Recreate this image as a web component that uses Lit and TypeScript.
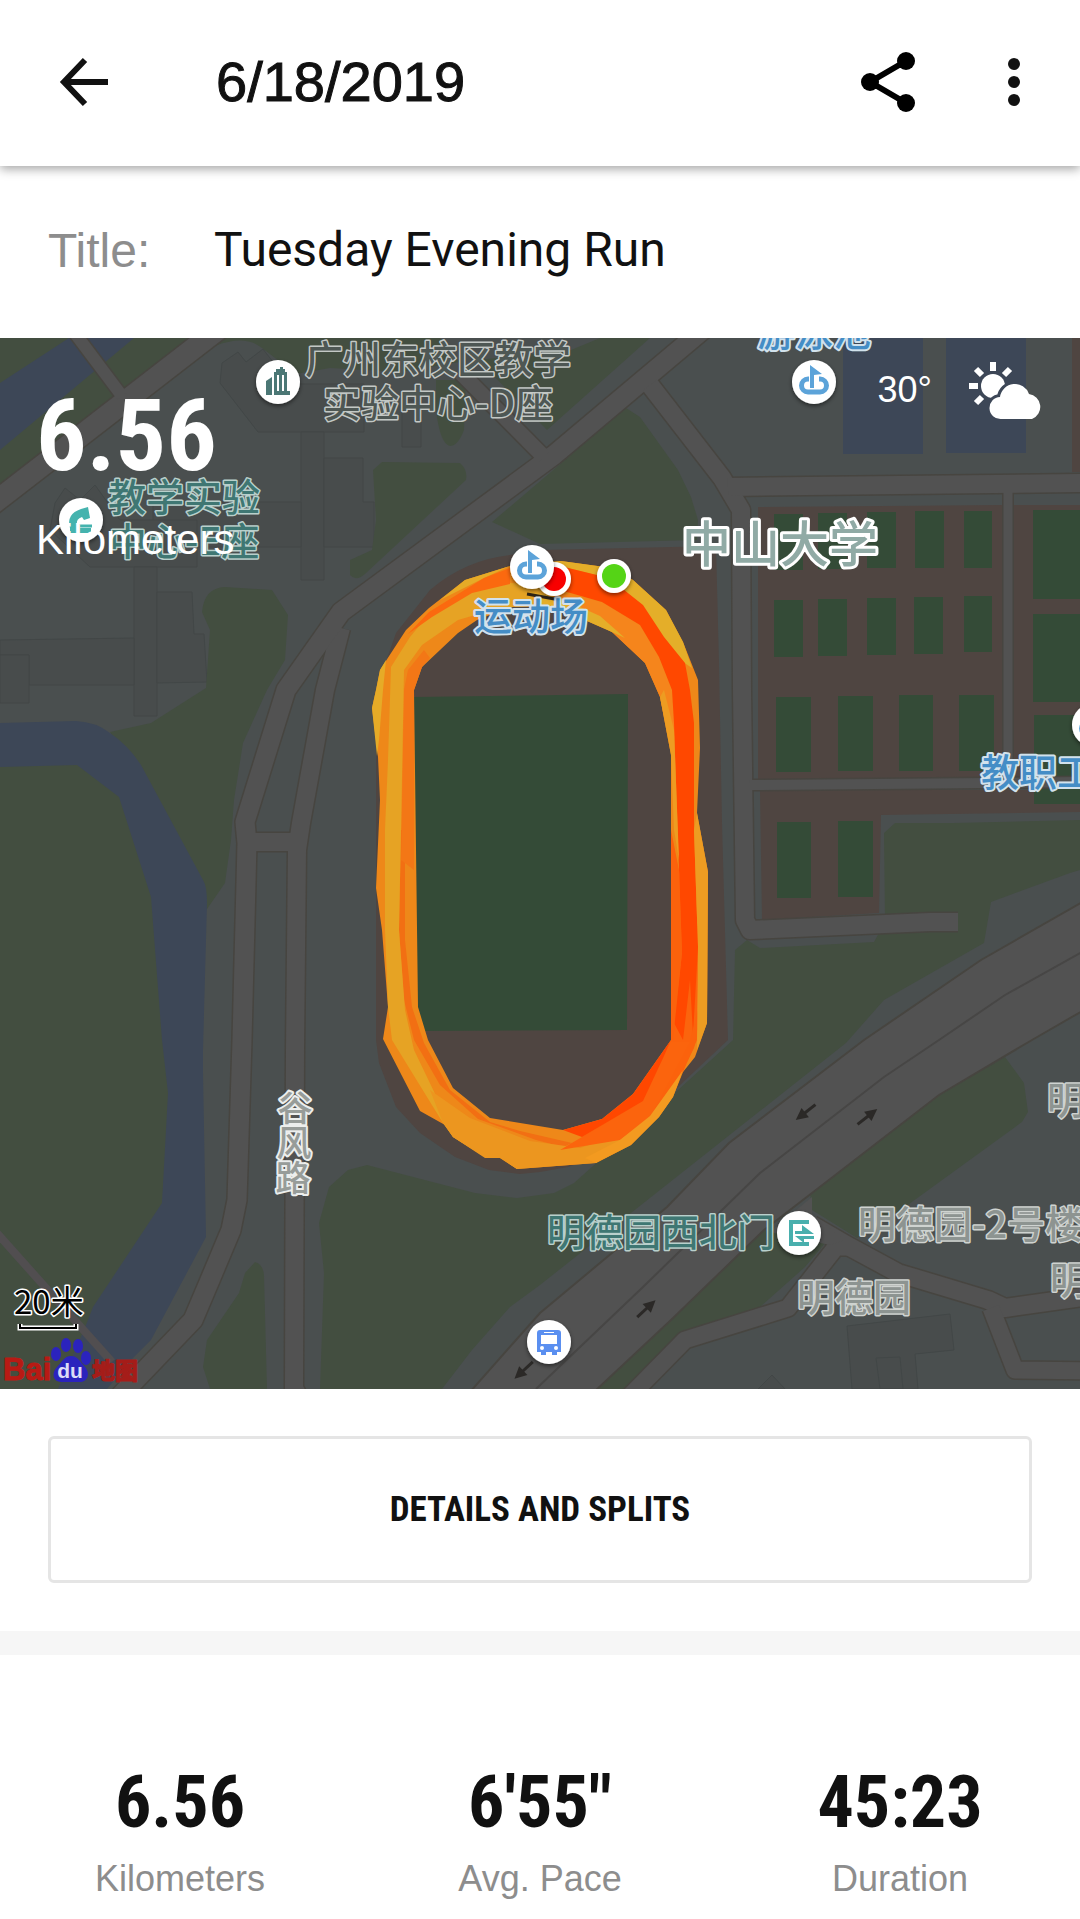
import { LitElement, html, svg, css } from "lit";
import { customElement, property } from "lit/decorators.js";

type Label = { text: string; x: number; y: number; kind: string; anchor?: string };

const COURTS: number[][] = [
  [774, 514, 29, 56], [818, 513, 29, 56], [867, 512, 29, 56], [915, 511, 29, 57], [964, 511, 28, 57],
  [774, 600, 29, 57], [818, 599, 29, 57], [867, 598, 29, 57], [914, 597, 29, 57], [964, 596, 28, 56],
  [776, 697, 35, 75], [838, 696, 35, 75], [899, 695, 34, 76], [959, 695, 35, 76],
  [777, 822, 34, 76], [838, 821, 35, 76],
  [1033, 510, 50, 89], [1033, 614, 50, 88], [1034, 715, 50, 89],
];

const ROADS: { d: string; w: number }[] = [
  { d: "M-10 506L220 328", w: 21 },
  { d: "M74 332L122 396", w: 12 },
  { d: "M300 1400L294 1388L295 1050L297 850L301 823L325 690L341 628", w: 18 },
  { d: "M120 1396L193 1320L210 1280L231 1230L237 1200L242 1040L247 843L245 822L286 690L341 612L554 455L705 328", w: 19 },
  { d: "M247 842L298 842", w: 18 },
  { d: "M460 372L544 457", w: 15 },
  { d: "M650 385L722 478L741 510L742 690L745 920L750 930L930 922L958 922", w: 18 },
  { d: "M728 487L900 485L1090 483", w: 18 },
  { d: "M1008 488L1008 782", w: 9 },
  { d: "M750 785L1090 782", w: 10 },
  { d: "M812 1225L850 1247L898 1273L988 1300L1005 1308L1090 1296", w: 18 },
  { d: "M850 1247L836 1247L788 1308L685 1340L630 1396", w: 17 },
  { d: "M991 1308L1015 1370L1090 1371", w: 17 },
];

const GREENS: string[] = [
  "M0 338H215L0 500Z",
  "M215 346Q245 334 262 348L296 374L330 368L400 372L460 362L440 338H225Z",
  "M436 380H466L464 430Q458 446 450 446Q440 444 436 410Z",
  "M478 360L571 350L600 338H650L547 430Z",
  "M626 408L640 417L678 470L691 497L698 520L697 540L540 544L492 522Z",
  "M382 462L460 463Q468 470 466 480L365 574Q356 582 350 575L350 560L372 550L376 520L373 470Z",
  "M110 732L151 723L206 688L210 630L202 612Q204 588 225 587L272 590L288 615L285 660L267 690L243 743L234 800L231 840L225 883L205 912L150 800Z",
  "M0 760H80L125 795L155 897L170 1093L162 1205L84 1330L58 1389H0Z",
  "M255 1262Q263 1264 264 1275L267 1389H210L203 1367L207 1340L239 1293L245 1273Z",
  "M367 1165L348 1170L329 1187L319 1223L324 1273L320 1389H442L472 1350L510 1307L540 1285L846 1043L884 1000L984 943L991 902L1070 873L1080 870V820L953 823H895L884 833L885 922L874 942L760 948L747 940L735 950L733 1040L678 1090L574 1183L554 1193L517 1198L475 1193Z",
  "M1005 1057L1024 1083L1028 1112L1022 1122L905 1207L857 1238L812 1210L810 1193L939 1095Z",
  "M764 1230L828 1240L805 1267L760 1307L681 1333L631 1389H597L671 1320Z",
];

const BUILDINGS: string[] = [
  "M222 363L238 352L246 362L263 349L290 384H364V432H258L220 383Z",
  "M301 432H324V580H301Z",
  "M324 458H363V502H374V547H324Z",
  "M402 400H421V447H402Z",
  "M153 502H301V547H153Z",
  "M55 503L65 488L80 500L95 485L120 520H197V567H90L50 530Z",
  "M134 567H157V716H134Z",
  "M157 592H192L194 634H204L207 682L157 683Z",
  "M0 640L134 638V685H29V655H0Z",
  "M0 655H29V703H0Z",
  "M847 1326L950 1314L954 1350L915 1354L918 1389H880L876 1358L900 1357L903 1389H852Z",
  "M758 1389L772 1375L785 1389Z",
];

const LABELS: Label[] = [
  { text: "广州东校区教学", x: 438, y: 373, kind: "ghost", anchor: "middle" },
  { text: "实验中心-D座", x: 438, y: 417, kind: "ghost", anchor: "middle" },
  { text: "教学实验", x: 184, y: 511, kind: "teal", anchor: "middle" },
  { text: "中心-E座", x: 184, y: 555, kind: "teal", anchor: "middle" },
  { text: "游泳池", x: 814, y: 346, kind: "blue", anchor: "middle" },
  { text: "运动场", x: 531, y: 630, kind: "blue", anchor: "middle" },
  { text: "中山大学", x: 780, y: 562, kind: "campus", anchor: "middle" },
  { text: "教职工", x: 981, y: 786, kind: "blue" },
  { text: "谷", x: 295, y: 1121, kind: "street", anchor: "middle" },
  { text: "风", x: 294, y: 1156, kind: "street", anchor: "middle" },
  { text: "路", x: 293, y: 1191, kind: "street", anchor: "middle" },
  { text: "明德园西北门", x: 547, y: 1246, kind: "teal" },
  { text: "明德园-2号楼", x: 858, y: 1238, kind: "gray" },
  { text: "明德园", x: 797, y: 1311, kind: "gray" },
  { text: "明", x: 1047, y: 1114, kind: "gray" },
  { text: "明", x: 1050, y: 1294, kind: "gray" },
];

@customElement("run-map")
class RunMap extends LitElement {
  static styles = css`
    :host { display: block; }
    svg { display: block; width: 100%; height: auto; background: #4a4f4f; }
    .green { fill: #434e40; }
    .water { fill: #3d4757; }
    .clay { fill: #4f4541; }
    .turf { fill: #344b37; }
    .building { fill: #484c4c; stroke: #424747; stroke-width: 1; }
    .edge { fill: none; stroke: #474540; stroke-linejoin: round; }
    .road { fill: none; stroke: #525252; stroke-linejoin: round; }
    .junction { fill: #525252; }
    .highway { fill: #525252; stroke: #474540; stroke-width: 2; }
    .centre { fill: none; stroke: #474645; stroke-width: 2; }
    .arrow { fill: none; stroke: #2b2927; stroke-width: 3; }
    .arrowhead { fill: #2b2927; }
    text {
      font-family: "Noto Sans CJK SC", sans-serif;
      font-size: 38px;
      font-weight: 500;
      paint-order: stroke;
      stroke-linejoin: round;
    }
    .ghost { fill: #4e5754; stroke: #c3c8c5; stroke-width: 3; }
    .teal { fill: #3f7773; stroke: #b9d0cc; stroke-width: 3; }
    .blue { fill: #448dc6; stroke: #d2e2ec; stroke-width: 4; }
    .gray { fill: #8d9491; stroke: #cfd3d0; stroke-width: 3; }
    .street { fill: #979c99; stroke: #eceeed; stroke-width: 4; font-size: 35px; }
    .campus { fill: #90aaa5; stroke: #ffffff; stroke-width: 6; font-size: 49px; }
    .scale { fill: #000; stroke: #fff; stroke-width: 3; font-size: 33px; font-weight: 400; }
    .brand { fill: #b81a14; stroke: #b81a14; stroke-width: 1; font-family: "Liberation Sans", sans-serif; font-size: 31px; font-weight: 700; }
    .brand-du { fill: #dcdcf6; font-family: "Liberation Sans", sans-serif; font-size: 21px; font-weight: 700; }
    .brand-map { fill: #a51c19; stroke: #a51c19; stroke-width: 1; font-size: 23px; font-weight: 900; }
  `;

  private arrow(x: number, y: number, angle: number) {
    return svg`<g transform="translate(${x} ${y}) rotate(${angle})">
      <path class="arrow" d="M-12 0H4"/><path class="arrowhead" d="M13 0L1 -6V6Z"/></g>`;
  }

  private pin(x: number, y: number, glyph: unknown) {
    return svg`<g transform="translate(${x} ${y})" filter="url(#drop)">
      <circle r="22" fill="#fff"/>${glyph}</g>`;
  }

  private flag() {
    return svg`<path d="M-5 -3H-6A6 6 0 0 0 -6 10H6A6 6 0 0 0 6 -3H5" fill="none" stroke="#5ba3d9" stroke-width="5"/>
      <path d="M-4 6V-17L8 -8L0 -7V6Z" fill="#5ba3d9"/>`;
  }

  render() {
    return html`<svg viewBox="0 338 1080 1051" role="img" aria-label="Route map">
      <defs>
        <filter id="drop" x="-30%" y="-30%" width="160%" height="170%">
          <feDropShadow dx="0" dy="2" stdDeviation="2" flood-color="#000" flood-opacity="0.5"/>
        </filter>
      </defs>
      ${BUILDINGS.map((d) => svg`<path class="building" d=${d}/>`)}
      ${GREENS.map((d) => svg`<path class="green" d=${d}/>`)}
      <path class="water" d="M0 383L69 338H134L0 450Z"/>
      <path class="water" d="M0 723L76 721Q96 722 110 733Q128 745 141 765L203 880Q207 886 207 903L203 1050L203 1073L206 1237L151 1340L134 1357L107 1389H58L84 1330L93 1307L162 1203L168 1093L162 1040L151 897L119 797L77 765L0 767Z"/>
      <path class="water" d="M843 338H923V454H843ZM946 338H1026V453H946Z"/>
      <path d="M-4 1232L112 1362" stroke="#514e50" stroke-width="8"/>
      <path class="clay" d="M1072 338H1080V472H1072Z"/>
      <path class="clay" d="M758 507L1003 505V779H758ZM1014 505H1080V779H1014ZM760 790H1080V812L881 815L879 913L762 920Z"/>
      <path class="clay" d="M540 550L716 546L719 663L722 823L728 1040L678 1087L620 1148L568 1167L540 1172L520 1174L489 1170L455 1157L420 1133L396 1107L379 1063L376 1040V690L396 633L430 590Q465 560 510 555Z"/>
      <path class="turf" d="M414 697L628 694L627 1030L417 1031Z"/>
      ${COURTS.map(([x, y, w, h]) => svg`<rect class="turf" x=${x} y=${y} width=${w} height=${h}/>`)}
      ${ROADS.map((r) => svg`<path class="edge" d=${r.d} stroke-width=${r.w + 3}/>`)}
      <path class="highway" d="M1084 901L981 960L864 1040L729 1143L667 1207L540 1313L470 1392H594L671 1320L764 1230L812 1193L939 1095L1032 1040L1084 1010Z"/>
      ${ROADS.map((r) => svg`<path class="road" d=${r.d} stroke-width=${r.w}/>`)}
      <path class="junction" d="M770 1232L812 1197V1214L845 1240L830 1245Z"/>
      <path class="centre" d="M1084 951L1005 995L939 1040L884 1077L760 1173L643 1287L536 1389"/>
      ${this.arrow(806, 1112, 142)} ${this.arrow(867, 1117, -38)}
      ${this.arrow(646, 1309, -43)} ${this.arrow(524, 1370, 137)}

      <path fill="#ee8819" d="M510 566L465 580L429 608L406 630L380 670L376 690L372 708L378 757L380 800L376 888L382 930L388 1007L383 1039L420 1111L445 1125L453 1137L485 1157L500 1158L517 1169L596 1163L631 1145L659 1117L673 1097L683 1072L695 1057L701 1040L707 1023L708 872L697 813L700 748L698 680L683 642L666 610L633 580L612 568L561 561Z
        M545 606L587 621L612 632L645 663L660 697L671 755V1040L633 1094L602 1119L563 1130L490 1118L453 1088L428 1040L418 1007L414 690L422 667L458 633L477 620L510 607Z" fill-rule="evenodd"/>
      <path fill="#f26f13" d="M401 830L399 930L404 1000L414 1040L440 1085L478 1119L536 1140L563 1147L572 1143L520 1131L490 1122L450 1090L424 1043L412 1007L405 940V830Z"/>
      <path fill="#f37716" d="M404 690L401 860L414 870V690L422 667L430 658L424 650L408 670Z"/>
      <path fill="#e6a324" d="M510 583L472 590L430 613L410 637L391 667L388 760L385 830V930L388 1007L392 1040L443 1123L453 1137L485 1157H500L517 1169L540 1150L470 1125L438 1100L414 1050L405 1010L399 930L401 830L404 670L422 645L458 620L482 613L510 607L548 606L560 585Z"/>
      <path fill="#ec961f" d="M430 1090L470 1118L530 1141L580 1148L640 1128L596 1163L517 1169L500 1158H485L453 1137L443 1123Z"/>
      <path fill="#e6ab27" d="M372 708L376 690L380 670L386 660L383 690L379 740L377 756ZM510 566L465 580L440 600L484 578Z"/>
      <path fill="#fb690f" d="M510 568L484 578L429 612L408 634L432 617L472 593L510 584Z"/>
      <path fill="#e4ae29" d="M510 566L561 561L612 568L633 580L666 610L683 642L692 668L680 660L655 628L636 600L600 576L560 566Z"/>
      <path fill="#f5851c" d="M548 590L602 602L640 625L659 657L672 690L676 740L668 735L660 697L645 663L612 632L587 618L548 604Z"/>
      <path fill="#e4ae29" d="M530 592L560 598L600 616L625 638L612 632L587 621L545 606Z"/>
      <path fill="#fb640d" d="M671 1040V900L682 870L699 930L697 1040L683 1072L655 1114L620 1140L560 1150L582 1137L643 1100Z"/>
      <path fill="#ff4800" d="M556 565L609 578L643 605L664 637L685 663L690 690L694 723V830L698 947L693 1035L690 980L683 1040L674 1023L682 953L679 870L674 723L672 690L659 657L640 625L602 602L560 590Z"/>
      <path fill="#ff4700" d="M671 1040L633 1094L602 1119L563 1130L582 1137L643 1101L664 1056Z"/>
      <path fill="#fb620c" d="M671 830L679 870L682 953L673 1040H690L698 1010V950L700 1020L694 1048L675 1085L650 1118L690 1042L671 1042Z"/>
      <path fill="#ed9c22" d="M697 813L708 872L707 1023L697 1050L698 947L694 830ZM660 697L671 755L674 830L679 860L674 730L664 690Z"/>
      <path fill="#f39a20" d="M596 1163L631 1145L659 1117L673 1097L683 1070L650 1116L620 1140L585 1158Z"/>
      <path d="M527 594L560 600M530 607L556 612" stroke="#2e2417" stroke-width="3" fill="none"/>

      ${LABELS.map((l) => svg`<text class=${l.kind} x=${l.x} y=${l.y} text-anchor=${l.anchor ?? "start"}>${l.text}</text>`)}

      <g filter="url(#drop)"><circle cx="554" cy="579" r="17" fill="#fff"/></g><circle cx="554" cy="579" r="12" fill="#f80000"/>
      <g filter="url(#drop)"><circle cx="614" cy="576" r="17" fill="#fff"/></g><circle cx="614" cy="576" r="12" fill="#55d416"/>
      ${this.pin(278, 382, svg`<path fill="#4c7775" d="M-12 -1L-6 -5V13H-12ZM-4 13V-10H-2V-13H2V-15H5V-13H7V-10H9V9H12V13Z"/><path d="M0 -7V9M5 -7V9" stroke="#fff" stroke-width="2"/>`)}
      ${this.pin(81, 520, svg`<path fill="#45b3ae" d="M0 -11L7 -13L9 -2L3 0L1 -3Q-5 -1 -4 4H-1V8H10V13H-11V8Q-15 -6 0 -11Z"/><path d="M-3 6H11" stroke="#45b3ae" stroke-width="3"/>`)}
      ${this.pin(814, 382, this.flag())}
      ${this.pin(532, 567, this.flag())}
      ${this.pin(1094, 725, this.flag())}
      ${this.pin(799, 1233, svg`<path d="M10 -11H-8V11H10" fill="none" stroke="#4aafad" stroke-width="4"/><path fill="#4aafad" d="M-4 -2H3V-8L15 1H-4ZM15 3H-4L5 10V6H15Z"/>`)}
      ${this.pin(549, 1342, svg`<path fill="#5a8ff0" d="M-9 -12H9Q12 -12 12 -9V10H8V13H3V10H-3V13H-8V10H-12V-9Q-12 -12 -9 -12Z"/><path fill="#fff" d="M-8 -7H8V2H-8ZM-5 -10H5V-9H-5Z"/><circle cx="-7" cy="6" r="2" fill="#fff"/><circle cx="7" cy="6" r="2" fill="#fff"/>`)}

      <text class="scale" x="14" y="1314">20米</text>
      <path d="M20 1324V1328H76V1324" fill="none" stroke="#fff" stroke-width="5"/>
      <path d="M20 1324V1328H76V1324" fill="none" stroke="#000" stroke-width="2"/>
      <text class="brand" x="3" y="1380">Bai</text>
      <g fill="#2b23bd">
        <ellipse cx="56" cy="1354" rx="5" ry="7"/><ellipse cx="66" cy="1345" rx="5" ry="7"/>
        <ellipse cx="78" cy="1346" rx="5" ry="7"/><ellipse cx="86" cy="1358" rx="5" ry="7"/>
        <path d="M71 1356C78 1356 80 1362 85 1367C91 1374 87 1382 80 1382H61C53 1382 51 1373 57 1367C62 1362 64 1356 71 1356Z"/>
      </g>
      <text class="brand-du" x="70" y="1378" text-anchor="middle">du</text>
      <text class="brand-map" x="92" y="1379">地图</text>
    </svg>`;
  }
}

@customElement("run-stat")
class RunStat extends LitElement {
  @property() value = "";
  @property() label = "";

  static styles = css`
    :host { display: flex; flex-direction: column; align-items: center; flex: 1; }
    .value {
      font: 700 72px/88px "Liberation Sans Narrow", "Roboto Condensed", "Liberation Sans", sans-serif;
      color: #111;
    }
    .label { font: 36px/48px "Liberation Sans", sans-serif; color: #8d8d8d; margin-top: 8px; }
  `;

  render() {
    return html`<div class="value">${this.value}</div><div class="label">${this.label}</div>`;
  }
}

@customElement("app-root")
class AppRoot extends LitElement {
  static styles = css`
    :host { display: block; background: #fff; color: #111; font-family: "Liberation Sans", sans-serif; }
    * { box-sizing: border-box; }
    button { border: 0; padding: 0; background: none; color: inherit; display: flex; cursor: pointer; }
    header {
      display: flex; align-items: center; height: 166px; padding: 0 48px 2px 56px;
      position: relative; background: #fff; box-shadow: 0 3px 10px rgba(0, 0, 0, 0.36);
    }
    h1 { flex: 1; margin: 0 0 0 104px; font-size: 56px; line-height: 64px; font-weight: 400; -webkit-text-stroke: 1px #111; }
    .actions { display: flex; align-items: center; gap: 80px; }
    .title-row { display: flex; align-items: center; height: 172px; padding: 0 48px 4px; font-size: 48px; }
    .title-row label { width: 166px; color: #8d8d8d; }
    .title-row input {
      flex: 1; min-width: 0; border: 0; padding: 0; outline: 0; color: #111; background: none;
      font: 48px/64px Roboto, sans-serif;
    }
    .map { position: relative; }
    .distance { position: absolute; left: 36px; top: 42px; color: #fff; }
    .big { font: 700 100px/112px "Liberation Sans Narrow", "Roboto Condensed", "Liberation Sans", sans-serif; }
    .unit { font-size: 42px; line-height: 48px; margin-top: 24px; }
    .weather { position: absolute; right: 32px; top: 20px; display: flex; align-items: center; gap: 36px; color: #fff; font-size: 36px; }
    .cta { padding: 47px 48px 48px; }
    .cta button {
      width: 100%; height: 147px; align-items: center; justify-content: center;
      border: 3px solid #e5e5e5; border-radius: 6px;
      font: 700 35px/48px "Liberation Sans Narrow", "Roboto Condensed", "Liberation Sans", sans-serif;
    }
    .band { height: 24px; background: #f6f6f6; }
    .stats { display: flex; padding: 104px 0 8px; }
  `;

  render() {
    return html`
      <header>
        <button aria-label="Back">
          <svg width="56" height="56" viewBox="0 0 56 56" fill="none" stroke="#111" stroke-width="6">
            <path d="M29 6L8 28L29 50M7 28H52"/>
          </svg>
        </button>
        <h1>6/18/2019</h1>
        <div class="actions">
          <button aria-label="Share">
            <svg width="56" height="62" viewBox="0 0 56 62" fill="#000">
              <path d="M10 31L46 10M10 31L46 52" stroke="#000" stroke-width="6"/>
              <circle cx="10" cy="31" r="9"/><circle cx="46" cy="10" r="9"/><circle cx="46" cy="52" r="9"/>
            </svg>
          </button>
          <button aria-label="More options">
            <svg width="36" height="56" viewBox="0 0 36 56" fill="#111">
              <circle cx="18" cy="10" r="6"/><circle cx="18" cy="28" r="6"/><circle cx="18" cy="46" r="6"/>
            </svg>
          </button>
        </div>
      </header>
      <div class="title-row">
        <label for="title">Title:</label>
        <input id="title" type="text" value="Tuesday Evening Run">
      </div>
      <div class="map">
        <run-map></run-map>
        <div class="distance">
          <div class="big">6.56</div>
          <div class="unit">Kilometers</div>
        </div>
        <div class="weather">
          <span>30°</span>
          <svg width="80" height="64" viewBox="0 0 80 64" fill="#fff" role="img" aria-label="Partly cloudy">
            <defs>
              <path id="cloud" d="M33 61A11 11 0 0 1 32 39A15 15 0 0 1 61 36A13 13 0 0 1 64 61Z"/>
              <mask id="behind-cloud">
                <rect width="80" height="64" fill="#fff"/>
                <use href="#cloud" fill="#000" stroke="#000" stroke-width="6"/>
              </mask>
            </defs>
            <circle cx="25" cy="28" r="12" mask="url(#behind-cloud)"/>
            <path d="M25 4V13M1 28H10M8 11L14 17M42 11L36 17M8 45L14 39" stroke="#fff" stroke-width="6"/>
            <use href="#cloud"/>
          </svg>
        </div>
      </div>
      <div class="cta"><button>DETAILS AND SPLITS</button></div>
      <div class="band"></div>
      <div class="stats">
        <run-stat value="6.56" label="Kilometers"></run-stat>
        <run-stat value="6'55&quot;" label="Avg. Pace"></run-stat>
        <run-stat value="45:23" label="Duration"></run-stat>
      </div>
    `;
  }
}
